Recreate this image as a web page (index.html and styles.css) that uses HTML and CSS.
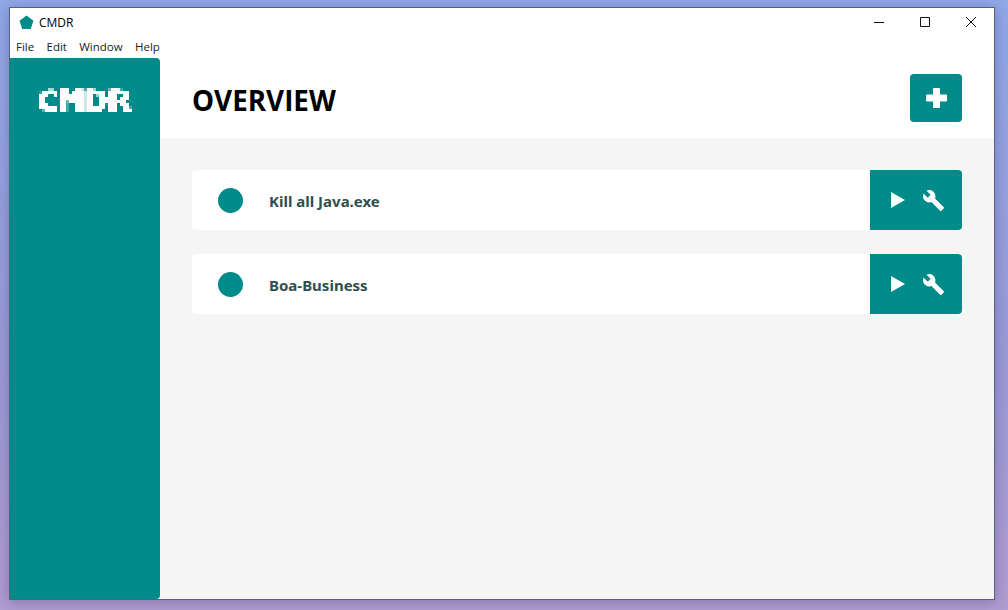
FILE: index.html
```html
<!DOCTYPE html>
<html lang="en">
<head>
<meta charset="utf-8">
<title>CMDR</title>
<link rel="stylesheet" href="styles.css">
</head>
<body>
<svg class="defs" width="0" height="0" aria-hidden="true">
  <filter id="pixelate" x="0" y="0" width="1" height="1" color-interpolation-filters="sRGB">
    <feFlood x="1" y="1" width="1" height="1" flood-color="#fff"/>
    <feComposite width="3" height="3"/>
    <feTile result="grid"/>
    <feComposite in="SourceGraphic" in2="grid" operator="in"/>
    <feMorphology operator="dilate" radius="1"/>
    <feComponentTransfer>
      <feFuncA type="linear" slope="2.4" intercept="-0.4"/>
    </feComponentTransfer>
  </filter>
</svg>
<div class="window">
  <header class="titlebar">
    <div class="app-title">
      <svg class="app-icon" viewBox="0 0 16 16"><path d="M8 .6 15.4 6l-2.8 8.8H3.4L.6 6z"/></svg>
      <span>CMDR</span>
    </div>
    <div class="controls">
      <button class="ctl"><svg viewBox="0 0 12 12"><path d="M1 6.5h10"/></svg></button>
      <button class="ctl"><svg viewBox="0 0 12 12"><path d="M1.5 1.5h9v9h-9z"/></svg></button>
      <button class="ctl"><svg viewBox="0 0 12 12"><path d="M1 1l10 10M11 1 1 11"/></svg></button>
    </div>
  </header>
  <nav class="menubar">
    <span>File</span><span>Edit</span><span>Window</span><span>Help</span>
  </nav>
  <div class="app">
    <aside class="sidebar"><div class="logo"><span class="logo-text">CMDR</span></div></aside>
    <main class="main">
      <div class="head">
        <h1>OVERVIEW</h1>
        <button class="add"><svg viewBox="0 0 21 20"><path d="M7 1a1 1 0 0 1 1-1h5a1 1 0 0 1 1 1v5.500h6a1 1 0 0 1 1 1v5a1 1 0 0 1-1 1h-6V19a1 1 0 0 1-1 1H8a1 1 0 0 1-1-1v-5.500H1a1 1 0 0 1-1-1v-5a1 1 0 0 1 1-1h6z"/></svg></button>
      </div>
      <div class="list">
        <div class="row">
          <span class="dot"></span>
          <span class="name">Kill all Java.exe</span>
          <div class="actions">
            <svg class="play" viewBox="0 0 14 16"><path d="M0 0l14 8L0 16z"/></svg>
            <svg class="wrench" viewBox="0 0 24 24"><path d="M22.7 19l-9.1-9.1c.9-2.3.4-5-1.5-6.9-2-2-5-2.4-7.4-1.3L9 6 6 9 1.600 4.700C.4 7.100.9 10.100 2.900 12.100c1.900 1.900 4.600 2.400 6.900 1.500l9.100 9.100c.4.4 1 .4 1.400 0l2.300-2.300c.5-.4.5-1.100.1-1.400z"/></svg>
          </div>
        </div>
        <div class="row">
          <span class="dot"></span>
          <span class="name">Boa-Business</span>
          <div class="actions">
            <svg class="play" viewBox="0 0 14 16"><path d="M0 0l14 8L0 16z"/></svg>
            <svg class="wrench" viewBox="0 0 24 24"><path d="M22.7 19l-9.1-9.1c.9-2.3.4-5-1.5-6.9-2-2-5-2.4-7.4-1.3L9 6 6 9 1.600 4.700C.4 7.100.9 10.100 2.900 12.100c1.900 1.900 4.600 2.400 6.900 1.500l9.100 9.100c.4.4 1 .4 1.400 0l2.300-2.300c.5-.4.5-1.100.1-1.400z"/></svg>
          </div>
        </div>
      </div>
    </main>
  </div>
</div>
</body>
</html>
```
FILE: styles.css
```css
* { box-sizing: border-box; }
html, body { height: 100%; }
body {
  margin: 0;
  padding: 7px 13px 10px 9px;
  overflow: hidden;
  background: linear-gradient(180deg, #8fa8e6 0%, #9a9ad6 60%, #b09cd0 100%);
  font-family: "Open Sans", sans-serif;
}
.defs { position: absolute; }
.window {
  height: 593px;
  display: flex;
  flex-direction: column;
  background: #fff;
  border: 1px solid #5a5f80;
  box-shadow: 0 2px 12px rgba(60, 50, 110, .35);
}
.titlebar {
  height: 28px;
  display: flex;
  justify-content: space-between;
  align-items: center;
  flex: none;
}
.app-title {
  display: flex;
  align-items: center;
  gap: 5px;
  padding-left: 9px;
  font-size: 12px;
  color: #000;
}
.app-icon { width: 15px; height: 15px; fill: #008b8b; }
.controls { display: flex; height: 28px; }
.ctl {
  width: 46px;
  height: 28px;
  border: 0;
  padding: 0;
  background: none;
  display: flex;
  align-items: center;
  justify-content: center;
}
.ctl svg { width: 12px; height: 12px; fill: none; stroke: #111; stroke-width: 1; }
.menubar {
  height: 22px;
  flex: none;
  display: flex;
  gap: 12.3px;
  align-items: center;
  padding: 0 0 1px 6px;
  font-size: 11.5px;
  color: #222;
}
.app { flex: 1; display: flex; min-height: 0; }
.sidebar {
  width: 150px;
  flex: none;
  background: #008b8b;
  border-radius: 0 4px 4px 0;
}
.logo {
  width: 120px;
  height: 36px;
  margin: 24px 0 0 14px;
  padding-top: 3px;
  display: flex;
  align-items: center;
  justify-content: center;
  filter: url(#pixelate);
}
.logo-text {
  display: inline-block;
  font-family: "DejaVu Sans Mono", monospace;
  font-weight: 700;
  font-size: 28px;
  line-height: 32px;
  color: #fff;
  -webkit-text-stroke: 1.2px #fff;
  transform: scaleX(1.42);
}
.main { flex: 1; display: flex; flex-direction: column; min-width: 0; }
.head {
  height: 80px;
  flex: none;
  display: flex;
  align-items: center;
  justify-content: space-between;
  padding: 0 32px;
}
h1 {
  margin: 4px 0 0;
  font-size: 27.8px;
  font-weight: 700;
  color: #000;
}
.add {
  width: 52px;
  height: 48px;
  border: 0;
  padding: 0;
  background: #008b8b;
  border-radius: 4px;
  display: flex;
  align-items: center;
  justify-content: center;
}
.add svg { width: 21px; height: 20px; fill: #fff; }
.list {
  flex: 1;
  background: #f5f5f5;
  padding: 32px;
  display: flex;
  flex-direction: column;
  gap: 24px;
}
.row {
  height: 60px;
  display: flex;
  align-items: center;
  background: #fff;
  border-radius: 4px;
  overflow: hidden;
}
.dot {
  width: 25px;
  height: 25px;
  margin-left: 26px;
  border-radius: 50%;
  background: #008b8b;
  flex: none;
}
.name {
  margin-left: 26px;
  padding-top: 1px;
  flex: 1;
  font-family: "Noto Sans", sans-serif;
  font-size: 15px;
  font-weight: 700;
  color: #2f4f4f;
}
.actions {
  width: 92px;
  height: 60px;
  flex: none;
  background: #008b8b;
  display: flex;
  align-items: center;
  padding-left: 21px;
  gap: 17px;
}
.play { width: 14px; height: 16px; fill: #fff; }
.wrench { width: 23px; height: 23px; fill: #fff; }
```
